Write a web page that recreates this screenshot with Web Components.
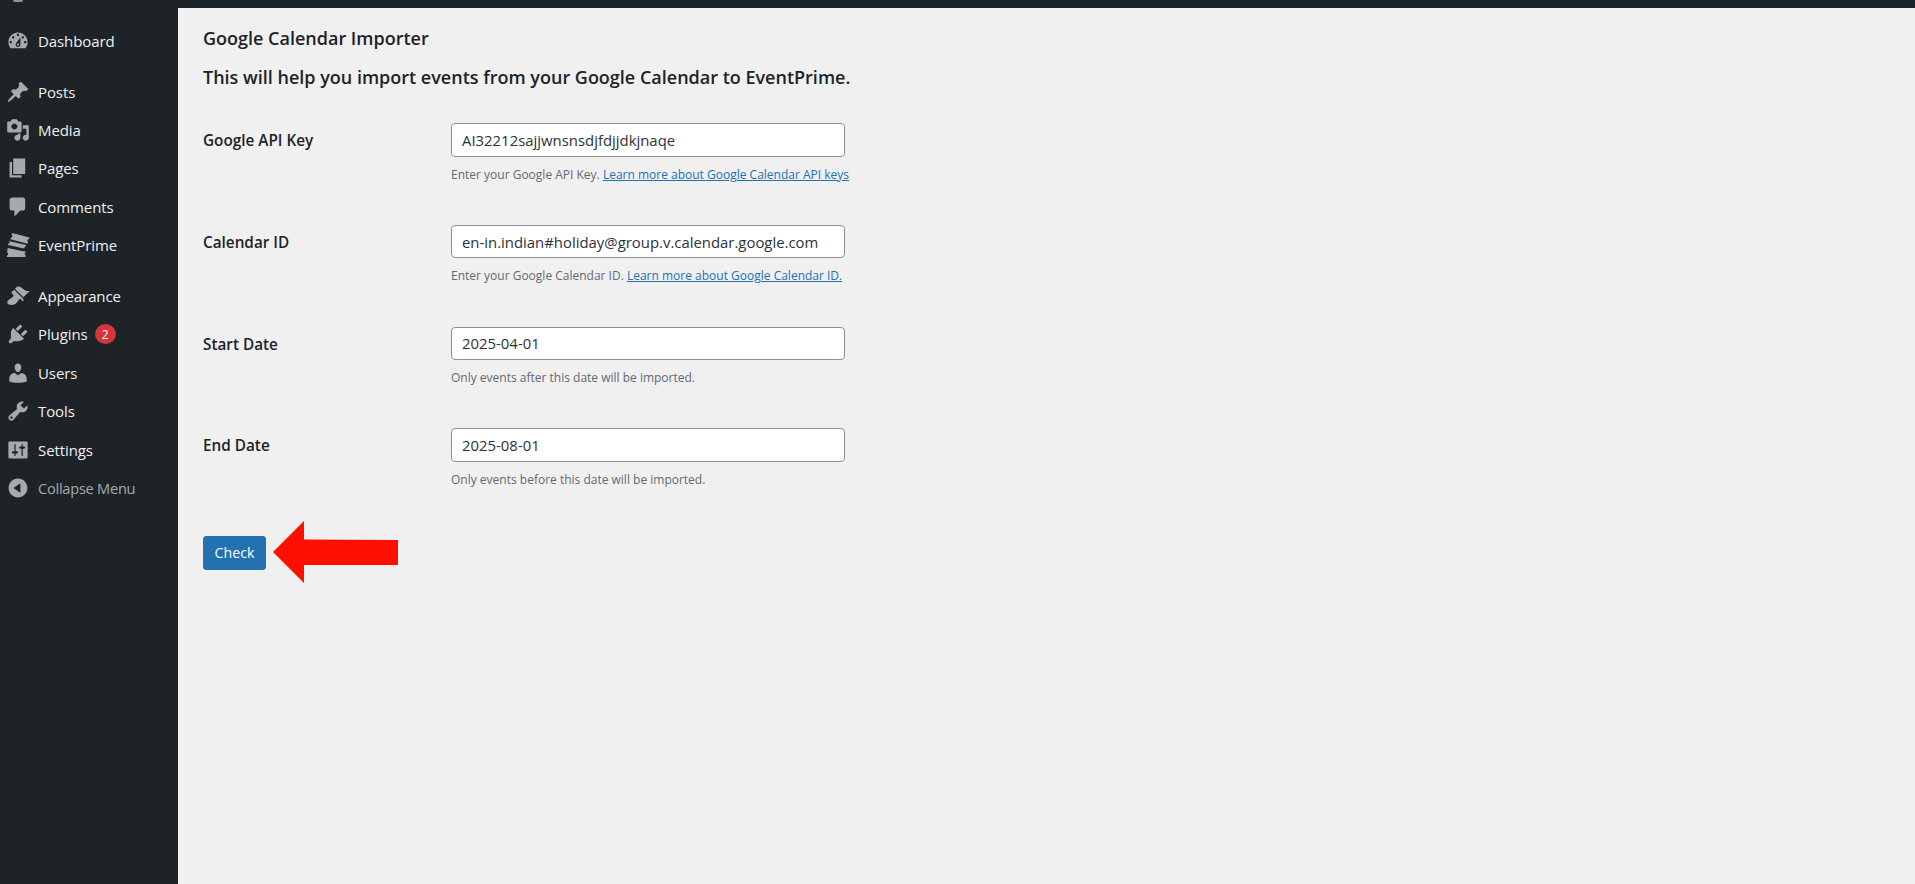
<!DOCTYPE html>
<html lang="en">
<head>
<meta charset="utf-8">
<title>Google Calendar Importer</title>
<style>
html, body { margin: 0; height: 100%; background: #f0f0f1; }
body { font-family: "Open Sans", "Noto Sans", sans-serif; overflow: hidden; }
</style>
</head>
<body>
<wp-shell>
	<admin-menu slot="menu">
		<menu-item icon="dashboard" class="gap">Dashboard</menu-item>
		<menu-item icon="post">Posts</menu-item>
		<menu-item icon="media">Media</menu-item>
		<menu-item icon="page">Pages</menu-item>
		<menu-item icon="comments">Comments</menu-item>
		<menu-item icon="tickets" class="gap">EventPrime</menu-item>
		<menu-item icon="appearance">Appearance</menu-item>
		<menu-item icon="plugins" badge="2">Plugins</menu-item>
		<menu-item icon="users">Users</menu-item>
		<menu-item icon="tools">Tools</menu-item>
		<menu-item icon="settings">Settings</menu-item>
		<menu-item icon="collapse" muted>Collapse Menu</menu-item>
	</admin-menu>
	<importer-page>
		<form-row label="Google API Key" value="AI32212sajjwnsnsdjfdjjdkjnaqe">Enter your Google API Key. <a href="#">Learn more about Google Calendar API keys</a></form-row>
		<form-row label="Calendar ID" value="en-in.indian#holiday@group.v.calendar.google.com">Enter your Google Calendar ID. <a href="#">Learn more about Google Calendar ID.</a></form-row>
		<form-row label="Start Date" value="2025-04-01">Only events after this date will be imported.</form-row>
		<form-row label="End Date" value="2025-08-01">Only events before this date will be imported.</form-row>
	</importer-page>
</wp-shell>

<script>
const ICONS = {
	dashboard: 'M3.76 16h12.48c1.1-1.37 1.76-3.11 1.76-5 0-4.42-3.58-8-8-8s-8 3.58-8 8c0 1.89.66 3.63 1.76 5zM10 4c.55 0 1 .45 1 1s-.45 1-1 1-1-.45-1-1 .45-1 1-1zM6 6c.55 0 1 .45 1 1s-.45 1-1 1-1-.45-1-1 .45-1 1-1zm8 0c.55 0 1 .45 1 1s-.45 1-1 1-1-.45-1-1 .45-1 1-1zm-5.37 5.55L12 7v6c0 1.1-.9 2-2 2s-2-.9-2-2c0-.57.24-1.08.63-1.45zM4 10c.55 0 1 .45 1 1s-.45 1-1 1-1-.45-1-1 .45-1 1-1zm12 0c.55 0 1 .45 1 1s-.45 1-1 1-1-.45-1-1 .45-1 1-1zm-5 3c0-.55-.45-1-1-1s-1 .45-1 1 .45 1 1 1 1-.45 1-1z',
	post: 'M10.44 3.02l1.82-1.82 6.36 6.35-1.83 1.82c-1.05-.68-2.48-.57-3.41.36l-.75.75c-.92.93-1.04 2.35-.35 3.41l-1.83 1.82-2.41-2.41-2.8 2.79c-.42.42-3.38 2.71-3.8 2.29s1.86-3.39 2.28-3.81l2.79-2.79L4.1 9.36l1.83-1.82c1.05.69 2.48.57 3.4-.36l.75-.75c.93-.92 1.05-2.35.36-3.41z',
	media: 'M13 11V4c0-.55-.45-1-1-1h-1.67L9 1H5L3.67 3H2c-.55 0-1 .45-1 1v7c0 .55.45 1 1 1h10c.55 0 1-.45 1-1zM7 4.5c1.38 0 2.5 1.12 2.5 2.5S8.38 9.5 7 9.5 4.5 8.38 4.5 7 5.62 4.5 7 4.5zM14 6h5v10.5c0 1.38-1.12 2.5-2.5 2.5S14 17.88 14 16.5s1.12-2.5 2.5-2.5c.17 0 .34.02.5.05V9h-3V6zm-4 8.05V13h2v3.5c0 1.38-1.12 2.5-2.5 2.5S7 17.88 7 16.5 8.12 14 9.5 14c.17 0 .34.02.5.05z',
	page: 'M6 15V2h10v13H6zm-1 1h8v2H3V5h2v11z',
	comments: 'M5 2h9c1.1 0 2 .9 2 2v7c0 1.1-.9 2-2 2h-2l-5 5v-5H5c-1.1 0-2-.9-2-2V4c0-1.1.9-2 2-2z',
	// hand drawn: three slanted tickets on a 20 unit grid
	tickets: 'M5 0l14.600 3.700-.5 1.600c-.7-.1-1.100.2-1.300.8s0 1.100.6 1.400l-.4 1.500L3.700 5.200l.4-1.500c.6.1 1.100-.2 1.200-.8s0-1.100-.6-1.300zM2.600 6.700l.5.100 13.700 3.200-.3 1.200c-.6 0-1 .3-1.100.8l-.2 1-13.600-3 .3-1.200c.5.100 1-.2 1.100-.7s-.1-.9-.4-1.100zM1.400 12.600l13.800 2.800 1.100-.3v1.200c-.5.100-.8.500-.8 1s.3.900.8 1V20H.8v-1.400c.6-.1 1-.6 1-1.200s-.3-1-.9-1.200l.5-3.600z',
	appearance: 'M14.48 11.06L7.41 3.99l1.5-1.5c.5-.56 2.3-.47 3.51.32 1.21.8 1.43 1.28 2.91 2.1 1.18.64 2.45 1.26 4.45.85zm-.71.71L6.7 4.7 4.93 6.47c-.39.39-.39 1.02 0 1.41l1.06 1.06c.39.39.39 1.03 0 1.42-.6.6-1.43 1.11-2.21 1.69-.35.26-.7.53-1.01.84C1.43 13.23.5 15.46 1.7 16.66c.41.41 1.04.64 1.69.77.41-.13.5-.4.5-.4s.14.32.46.48c1.58.07 3.29-.52 4.18-1.41.3-.31.57-.66.84-1.02.57-.78 1.08-1.61 1.69-2.21.39-.39 1.02-.39 1.41 0l1.06 1.06c.39.39 1.02.39 1.41 0z',
	plugins: 'M13.11 4.36L9.87 7.6 8 5.73l3.24-3.24c.35-.34 1.05-.2 1.56.32.52.51.66 1.21.31 1.55zm-8 1.77l.91-1.12 9.01 9.01-1.19.84c-.71.71-2.63 1.16-3.82 1.16H6.14L4.9 17.26c-.59.59-1.54.59-2.12 0-.59-.58-.59-1.53 0-2.12l1.24-1.24v-3.88c0-1.13.4-3.19 1.09-3.89zm7.26 3.97l3.24-3.24c.34-.35 1.04-.21 1.55.31.52.51.66 1.21.31 1.55l-3.24 3.25z',
	users: 'M10 9.25c-2.27 0-2.73-3.44-2.73-3.44C7 4.02 7.82 2 9.97 2c2.16 0 2.98 2.02 2.71 3.81 0 0-.41 3.44-2.68 3.44zm0 2.57L12.72 10c2.39 0 4.52 2.33 4.52 4.53v2.49s-3.65 1.13-7.24 1.13c-3.65 0-7.24-1.13-7.24-1.13v-2.49c0-2.25 1.94-4.48 4.47-4.48z',
	tools: 'M16.68 9.77c-1.34 1.34-3.3 1.67-4.95.99l-5.41 6.52c-.99.99-2.59.99-3.58 0s-.99-2.59 0-3.57l6.52-5.42c-.68-1.65-.35-3.61.99-4.95 1.28-1.28 3.12-1.62 4.72-1.06l-2.89 2.89 2.82 2.82 2.86-2.87c.53 1.58.18 3.39-1.08 4.65zM3.81 16.21c.4.39 1.04.39 1.43 0 .4-.4.4-1.04 0-1.43-.39-.4-1.03-.4-1.43 0-.39.39-.39 1.03 0 1.43z',
	settings: 'M18 16V4c0-.55-.45-1-1-1H3c-.55 0-1 .45-1 1v12c0 .55.45 1 1 1h14c.55 0 1-.45 1-1zM8 11h1c.55 0 1 .45 1 1s-.45 1-1 1H8v1.5c0 .28-.22.5-.5.5s-.5-.22-.5-.5V13H6c-.55 0-1-.45-1-1s.45-1 1-1h1V5.5c0-.28.22-.5.5-.5s.5.22.5.5V11zm5-2h-1c-.55 0-1-.45-1-1s.45-1 1-1h1V5.5c0-.28.22-.5.5-.5s.5.22.5.5V7h1c.55 0 1 .45 1 1s-.45 1-1 1h-1v5.5c0 .28-.22.5-.5.5s-.5-.22-.5-.5V9z',
	collapse: 'M10 2.16c4.33 0 7.84 3.51 7.84 7.84s-3.51 7.84-7.84 7.84S2.16 14.33 2.16 10 5.71 2.16 10 2.16zm2 11.72V6.12L6.18 9.97z'
};

class WpShell extends HTMLElement {
	constructor() {
		super();
		this.attachShadow({ mode: 'open' }).innerHTML = `
<style>
:host { display: flex; flex-direction: column; height: 884px; background: #f0f0f1; }
.bar { height: 8px; flex: none; background: #1d2327; }
.logo { display: block; width: 10px; height: 2px; margin-left: 13px; border-radius: 0 0 5px 5px; background: #8f949b; }
.body { flex: 1; display: flex; min-height: 0; }
.side { width: 178px; flex: none; background: #1d2327; }
.main { flex: 1; min-width: 0; }
</style>
<div class="bar"><span class="logo"></span></div>
<div class="body">
	<div class="side"><slot name="menu"></slot></div>
	<div class="main"><slot></slot></div>
</div>`;
	}
}

class AdminMenu extends HTMLElement {
	constructor() {
		super();
		this.attachShadow({ mode: 'open' }).innerHTML = `
<style>
:host { display: flex; flex-direction: column; padding-top: 13.5px; }
</style>
<slot></slot>`;
	}
}

class MenuItem extends HTMLElement {
	constructor() {
		super();
		const icon = ICONS[this.getAttribute('icon')];
		const badge = this.getAttribute('badge');
		this.attachShadow({ mode: 'open' }).innerHTML = `
<style>
:host { display: flex; align-items: center; height: 38.4px; color: #f0f0f1; font-size: 15px; letter-spacing: -0.1px; }
:host(.gap) { margin-bottom: 12.5px; }
:host([muted]) { color: #a7aaad; font-size: 14.6px; letter-spacing: -0.25px; }
svg { width: 24px; height: 24px; margin: 0 8px 0 6px; flex: none; fill: #a7aaad; }
.badge { margin-left: 7px; width: 21px; height: 20px; border-radius: 50%; background: #d63638; color: #fff; font-size: 12px; display: flex; align-items: center; justify-content: center; }
</style>
<svg viewBox="0 0 20 20"><path d="${icon}"/></svg>
<span><slot></slot></span>
${badge ? `<span class="badge">${badge}</span>` : ''}`;
	}
}

class FormRow extends HTMLElement {
	constructor() {
		super();
		this.attachShadow({ mode: 'open' }).innerHTML = `
<style>
:host { display: grid; grid-template-columns: 248px 394px; height: 101.7px; color: #1d2327; }
label { font-weight: 600; font-size: 15.3px; height: 34px; display: flex; align-items: center; }
.box { box-sizing: border-box; height: 33.5px; padding: 0 10px; display: flex; align-items: center; background: #fff; border: 1px solid #8c8f94; border-radius: 4px; font-size: 14.9px; color: #2c3338; white-space: nowrap; }
.hint { margin-top: 8px; font-size: 12px; line-height: 20px; color: #646970; white-space: nowrap; }
::slotted(a) { color: #2271b1; }
</style>
<label>${this.getAttribute('label')}</label>
<div>
	<div class="box">${this.getAttribute('value')}</div>
	<div class="hint"><slot></slot></div>
</div>`;
	}
}

class ImporterPage extends HTMLElement {
	constructor() {
		super();
		this.attachShadow({ mode: 'open' }).innerHTML = `
<style>
:host { display: block; padding: 19px 25px 0; color: #1d2327; }
h1 { margin: 0; font-size: 18px; line-height: 22px; font-weight: 600; }
h2 { margin: 16px 0 0; font-size: 18px; line-height: 24px; font-weight: 600; }
.rows { margin-top: 34.3px; }
.actions { position: relative; margin-top: 5.7px; }
button { display: block; width: 63px; height: 34px; padding: 0; border: 1px solid #2271b1; border-radius: 3px; background: #2271b1; color: #fff; font: inherit; font-size: 14.2px; }
.arrow { position: absolute; left: 70px; top: -15px; width: 125px; height: 62px; }
</style>
<h1>Google Calendar Importer</h1>
<h2>This will help you import events from your Google Calendar to EventPrime.</h2>
<div class="rows"><slot></slot></div>
<div class="actions">
	<button type="button">Check</button>
	<svg class="arrow" viewBox="0 0 125 62"><polygon fill="#fe0f00" points="0,31 31,0 31,18.500 125,19 125,44 31,44 31,62"/></svg>
</div>`;
	}
}

customElements.define('wp-shell', WpShell);
customElements.define('admin-menu', AdminMenu);
customElements.define('menu-item', MenuItem);
customElements.define('form-row', FormRow);
customElements.define('importer-page', ImporterPage);
</script>
</body>
</html>
